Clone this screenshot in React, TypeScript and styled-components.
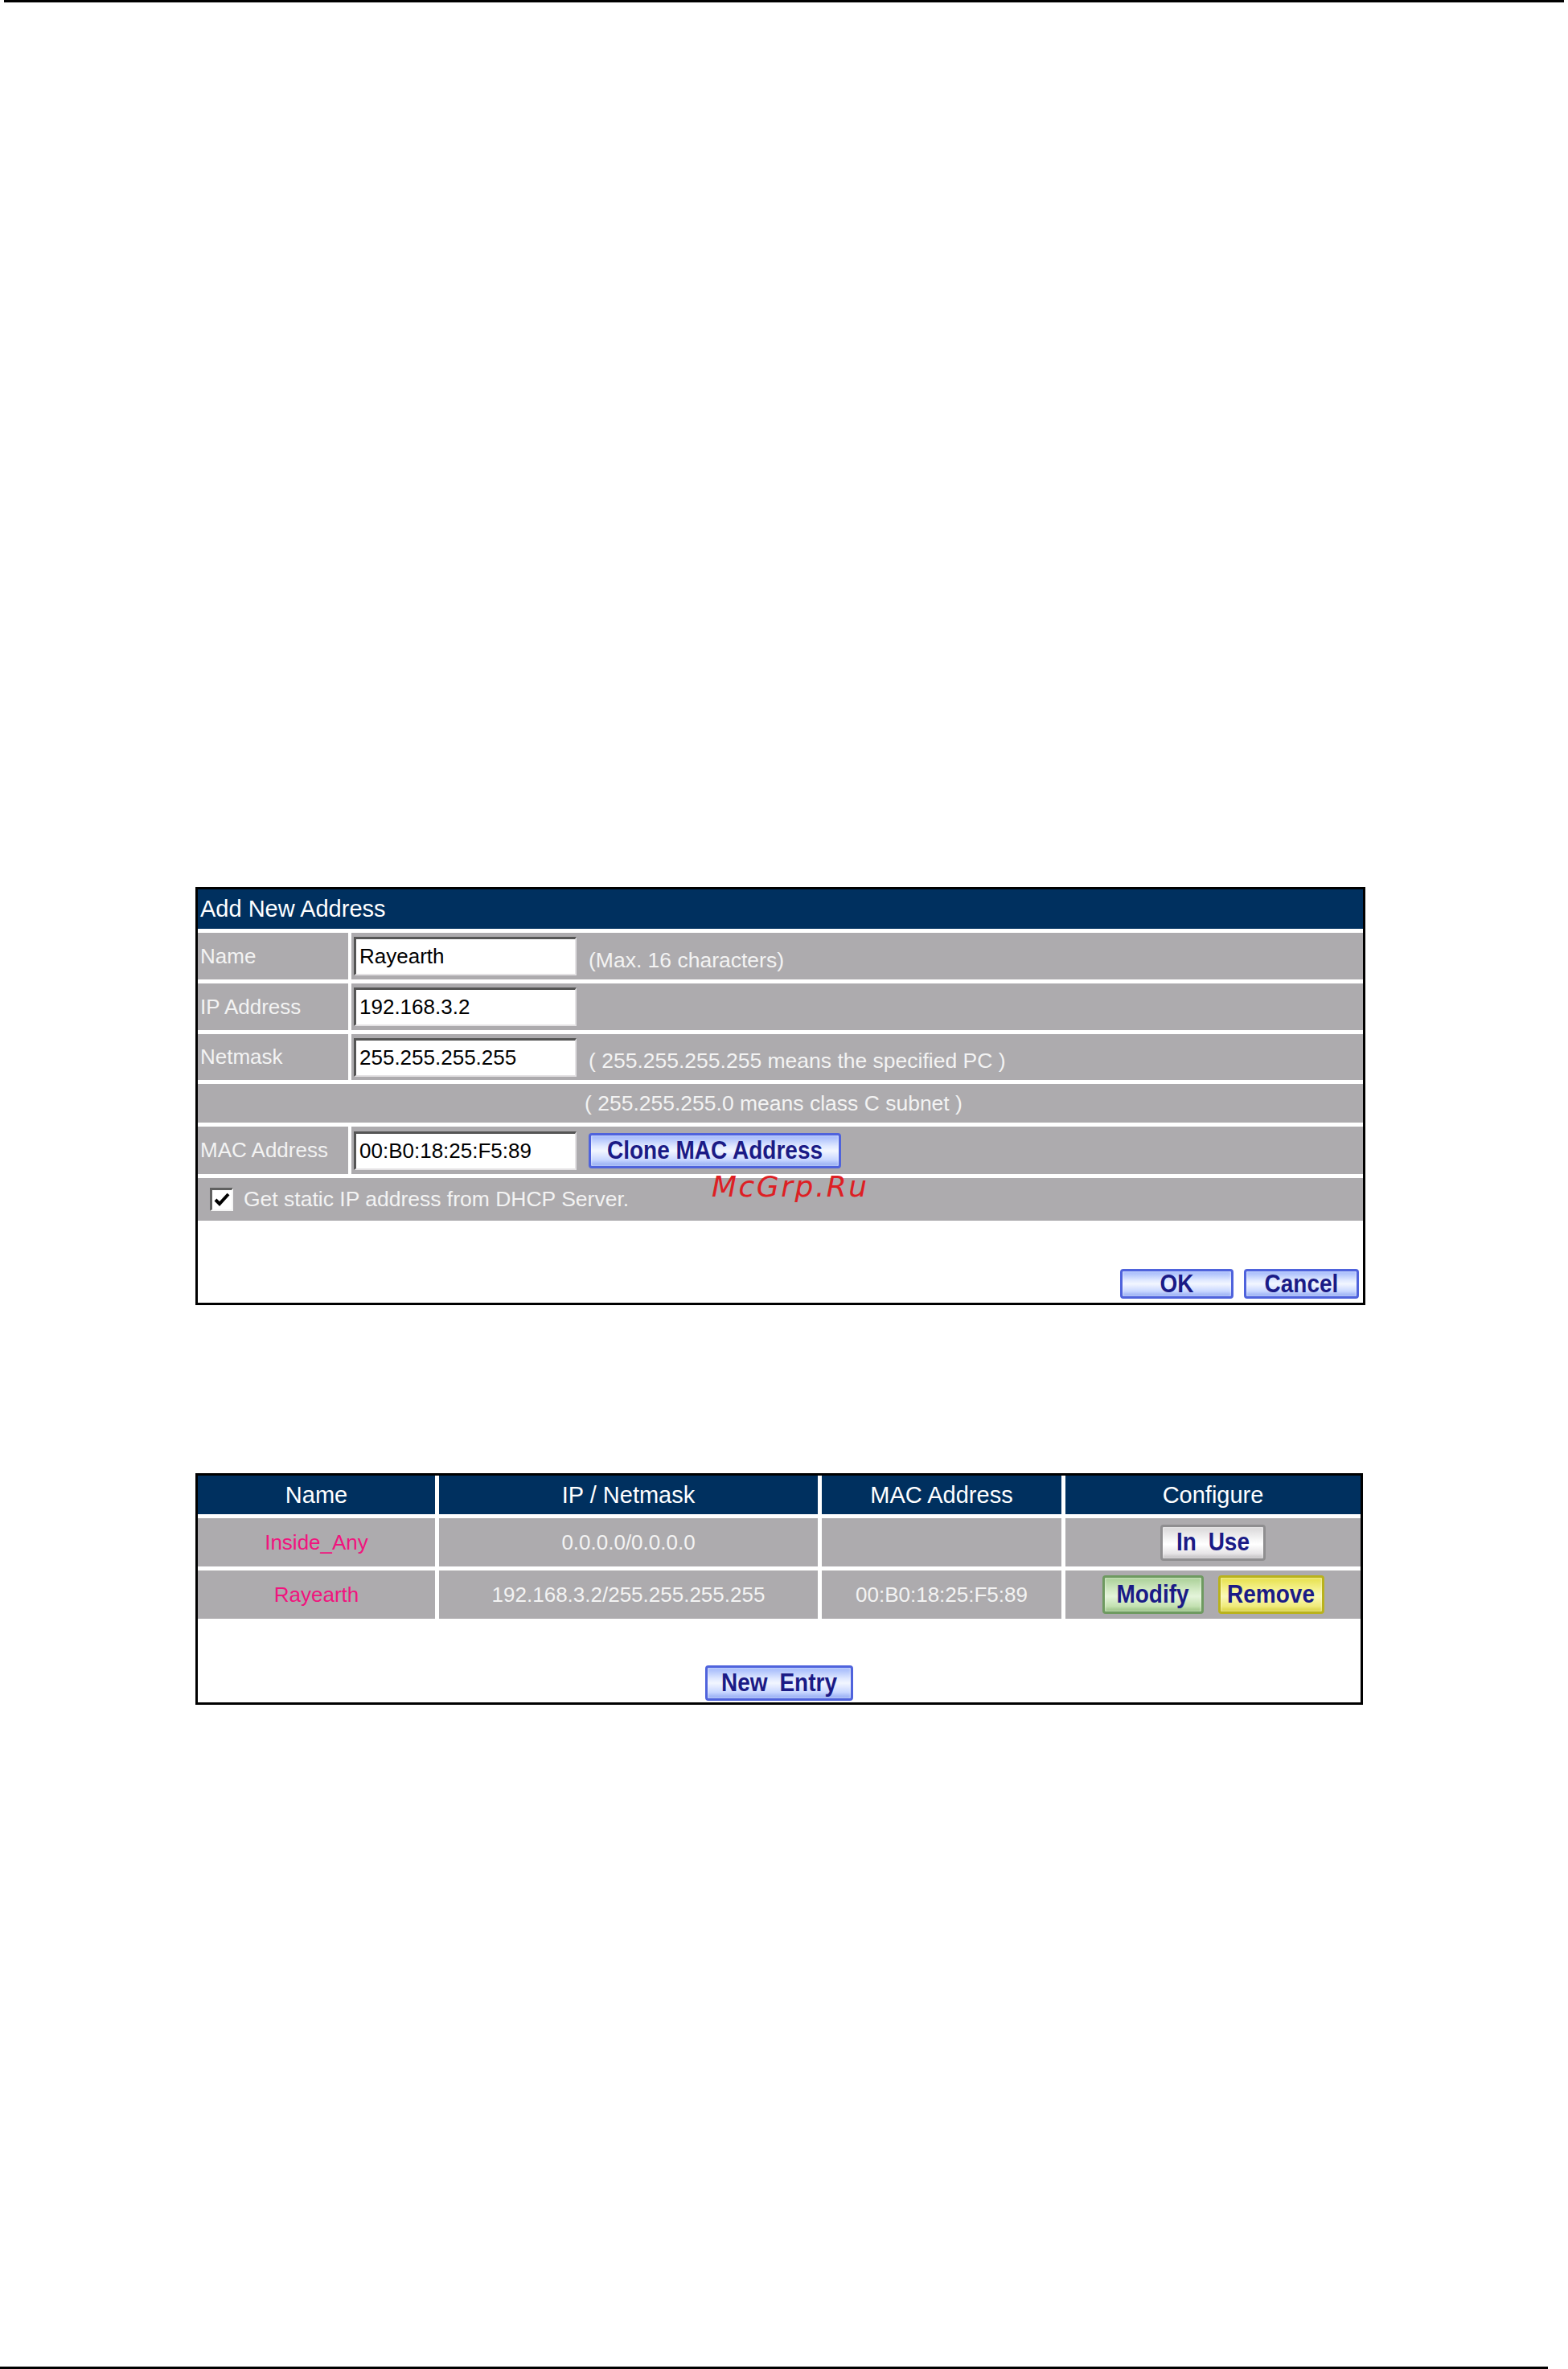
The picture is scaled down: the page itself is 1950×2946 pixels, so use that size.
import * as React from "react";
import styled, { createGlobalStyle, css } from "styled-components";

const GlobalStyle = createGlobalStyle`
  html, body {
    margin: 0;
    padding: 0;
    background: #ffffff;
  }
  body {
    font-family: "Liberation Sans", Arial, sans-serif;
  }
`;

const NAVY = "#00305f";
const GREY = "#adabae";
const SOFT_WHITE = "#f3f3f3";
const INK = "#1b1b86";

type ButtonTone = "blue" | "grey" | "green" | "yellow";

const tones: Record<ButtonTone, ReturnType<typeof css>> = {
  blue: css`
    border-color: #4f63dc;
    background: linear-gradient(
      to bottom,
      #9fb6fb 0%,
      #dfe8ff 35%,
      #f2f6ff 50%,
      #c9d7ff 80%,
      #8ea7f2 100%
    );
  `,
  grey: css`
    border-color: #8f8e90;
    background: linear-gradient(
      to bottom,
      #d8d6d8 0%,
      #f6f6f6 40%,
      #ffffff 55%,
      #e6e4e6 85%,
      #bdbbbd 100%
    );
  `,
  green: css`
    border-color: #6e9a60;
    background: linear-gradient(
      to bottom,
      #a9cf96 0%,
      #d6ecc9 40%,
      #e4f4da 55%,
      #c2e0b0 85%,
      #93bd7f 100%
    );
  `,
  yellow: css`
    border-color: #b9b21c;
    background: linear-gradient(
      to bottom,
      #e6e04a 0%,
      #f8f59a 40%,
      #fbf9b8 55%,
      #efea78 85%,
      #d6cf3a 100%
    );
  `,
};

const Page = styled.div`
  position: relative;
  display: flex;
  flex-direction: column;
  width: 1950px;
  height: 2946px;
  overflow: hidden;
`;

const TopRule = styled.div`
  height: 3px;
  margin: 0 5px 0 5px;
  background: #000;
`;

const BottomRule = styled.div`
  height: 3px;
  margin-top: auto;
  margin-right: 25px;
  background: #000;
`;

const FormBox = styled.div`
  position: relative;
  box-sizing: border-box;
  width: 1455px;
  margin: 1100px 0 0 243px;
  border: 3px solid #000;
  background: #fff;
`;

const Rows = styled.div`
  display: grid;
  row-gap: 5px;
`;

const HeaderBar = styled.div`
  display: flex;
  align-items: center;
  height: 49px;
  padding-left: 3px;
  background: ${NAVY};
  color: #fff;
  font-size: 29px;
`;

const FieldRow = styled.div<{ $h: number }>`
  display: grid;
  grid-template-columns: 187px 1fr;
  column-gap: 4px;
  height: ${(p) => p.$h}px;
`;

const LabelCell = styled.div`
  display: flex;
  align-items: center;
  padding-left: 3px;
  background: ${GREY};
  color: ${SOFT_WHITE};
  font-size: 26px;
  white-space: nowrap;
`;

const ValueCell = styled.div`
  display: flex;
  align-items: center;
  gap: 15px;
  padding-left: 3px;
  background: ${GREY};
`;

const WideRow = styled.div<{ $h: number; $indent: number }>`
  display: flex;
  align-items: center;
  gap: 13px;
  height: ${(p) => p.$h}px;
  padding-left: ${(p) => p.$indent}px;
  background: ${GREY};
  color: ${SOFT_WHITE};
  font-size: 26.5px;
`;

const Hint = styled.span`
  color: ${SOFT_WHITE};
  font-size: 26.5px;
  margin-top: 10px;
  white-space: nowrap;
`;

const TextField = styled.input`
  box-sizing: border-box;
  width: 277px;
  height: 48px;
  padding: 0 4px;
  margin: 0;
  border-style: solid;
  border-width: 3px 2px 2px 3px;
  border-color: #555 #e4e2e4 #e4e2e4 #555;
  background: #fff;
  color: #000;
  font-family: "Liberation Sans", Arial, sans-serif;
  font-size: 26px;
  outline: none;
`;

const Btn = styled.button<{
  $tone: ButtonTone;
  $w: number;
  $h: number;
  $spaced?: boolean;
}>`
  box-sizing: border-box;
  display: inline-flex;
  align-items: center;
  justify-content: center;
  width: ${(p) => p.$w}px;
  height: ${(p) => p.$h}px;
  padding: 0;
  border: 3px solid;
  border-radius: 4px;
  ${(p) => tones[p.$tone]}
  color: ${INK};
  font-family: "Liberation Sans", Arial, sans-serif;
  font-weight: 700;
  font-size: 28px;
  word-spacing: ${(p) => (p.$spaced ? "7px" : "0")};
  white-space: nowrap;
  cursor: pointer;
  box-shadow: inset 0 0 3px rgba(255, 255, 255, 0.8);
`;

const BtnText = styled.span`
  display: inline-block;
  transform: scaleY(1.12);
`;

const CheckBox = styled.span`
  box-sizing: border-box;
  display: inline-flex;
  align-items: center;
  justify-content: center;
  width: 29px;
  height: 29px;
  border-style: solid;
  border-width: 3px 2px 2px 3px;
  border-color: #606060 #f4f4f4 #f4f4f4 #606060;
  background: #fff;
`;

const FormFooter = styled.div`
  display: flex;
  justify-content: flex-end;
  align-items: flex-end;
  gap: 13px;
  height: 102px;
  box-sizing: border-box;
  padding: 0 5px 5px 0;
`;

const Watermark = styled.span`
  position: absolute;
  left: 639px;
  top: 352px;
  color: #dd1f24;
  font-family: "DejaVu Sans", sans-serif;
  font-style: italic;
  font-size: 36px;
  letter-spacing: 2.5px;
  line-height: 1;
  pointer-events: none;
`;

const ListBox = styled.div`
  box-sizing: border-box;
  width: 1452px;
  margin: 209px 0 0 243px;
  border: 3px solid #000;
  background: #fff;
`;

const ListGrid = styled.div`
  display: grid;
  grid-template-columns: 295px 471px 298px 1fr;
  grid-template-rows: 48px 60px 60px;
  gap: 5px;
`;

const HeadCell = styled.div`
  display: flex;
  align-items: center;
  justify-content: center;
  background: ${NAVY};
  color: #fff;
  font-size: 29px;
`;

const BodyCell = styled.div<{ $pink?: boolean }>`
  display: flex;
  align-items: center;
  justify-content: center;
  gap: 18px;
  background: ${GREY};
  color: ${(p) => (p.$pink ? "#f0147e" : SOFT_WHITE)};
  font-size: 26px;
`;

const ListFooter = styled.div`
  display: flex;
  justify-content: center;
  align-items: flex-end;
  height: 104px;
  box-sizing: border-box;
  padding-bottom: 2px;
`;

const CheckMark = () => (
  <svg width="20" height="18" viewBox="0 0 20 18">
    <path d="M2 9 L7 14 L18 2" fill="none" stroke="#000" strokeWidth="4" />
  </svg>
);

const entries = [
  {
    name: "Inside_Any",
    ipMask: "0.0.0.0/0.0.0.0",
    mac: "",
    inUse: true,
  },
  {
    name: "Rayearth",
    ipMask: "192.168.3.2/255.255.255.255",
    mac: "00:B0:18:25:F5:89",
    inUse: false,
  },
];

export default function App() {
  return (
    <Page>
      <GlobalStyle />
      <TopRule />

      <FormBox>
        <Rows>
          <HeaderBar>Add New Address</HeaderBar>
          <FieldRow $h={58}>
            <LabelCell>Name</LabelCell>
            <ValueCell>
              <TextField readOnly value="Rayearth" />
              <Hint>(Max. 16 characters)</Hint>
            </ValueCell>
          </FieldRow>
          <FieldRow $h={58}>
            <LabelCell>IP Address</LabelCell>
            <ValueCell>
              <TextField readOnly value="192.168.3.2" />
            </ValueCell>
          </FieldRow>
          <FieldRow $h={57}>
            <LabelCell>Netmask</LabelCell>
            <ValueCell>
              <TextField readOnly value="255.255.255.255" />
              <Hint>( 255.255.255.255 means the specified PC )</Hint>
            </ValueCell>
          </FieldRow>
          <WideRow $h={48} $indent={481}>
            ( 255.255.255.0 means class C subnet )
          </WideRow>
          <FieldRow $h={59}>
            <LabelCell>MAC Address</LabelCell>
            <ValueCell>
              <TextField readOnly value="00:B0:18:25:F5:89" />
              <Btn $tone="blue" $w={314} $h={44}>
                <BtnText>Clone MAC Address</BtnText>
              </Btn>
            </ValueCell>
          </FieldRow>
          <WideRow $h={53} $indent={15}>
            <CheckBox>
              <CheckMark />
            </CheckBox>
            Get static IP address from DHCP Server.
          </WideRow>
        </Rows>
        <FormFooter>
          <Btn $tone="blue" $w={141} $h={37}>
            <BtnText>OK</BtnText>
          </Btn>
          <Btn $tone="blue" $w={143} $h={37}>
            <BtnText>Cancel</BtnText>
          </Btn>
        </FormFooter>
        <Watermark>McGrp.Ru</Watermark>
      </FormBox>

      <ListBox>
        <ListGrid>
          <HeadCell>Name</HeadCell>
          <HeadCell>IP / Netmask</HeadCell>
          <HeadCell>MAC Address</HeadCell>
          <HeadCell>Configure</HeadCell>
          {entries.map((e) => (
            <React.Fragment key={e.name}>
              <BodyCell $pink>{e.name}</BodyCell>
              <BodyCell>{e.ipMask}</BodyCell>
              <BodyCell>{e.mac}</BodyCell>
              <BodyCell>
                {e.inUse ? (
                  <Btn $tone="grey" $w={131} $h={45} $spaced>
                    <BtnText>In Use</BtnText>
                  </Btn>
                ) : (
                  <>
                    <Btn $tone="green" $w={126} $h={48}>
                      <BtnText>Modify</BtnText>
                    </Btn>
                    <Btn $tone="yellow" $w={132} $h={48}>
                      <BtnText>Remove</BtnText>
                    </Btn>
                  </>
                )}
              </BodyCell>
            </React.Fragment>
          ))}
        </ListGrid>
        <ListFooter>
          <Btn $tone="blue" $w={184} $h={44} $spaced>
            <BtnText>New Entry</BtnText>
          </Btn>
        </ListFooter>
      </ListBox>

      <BottomRule />
    </Page>
  );
}
